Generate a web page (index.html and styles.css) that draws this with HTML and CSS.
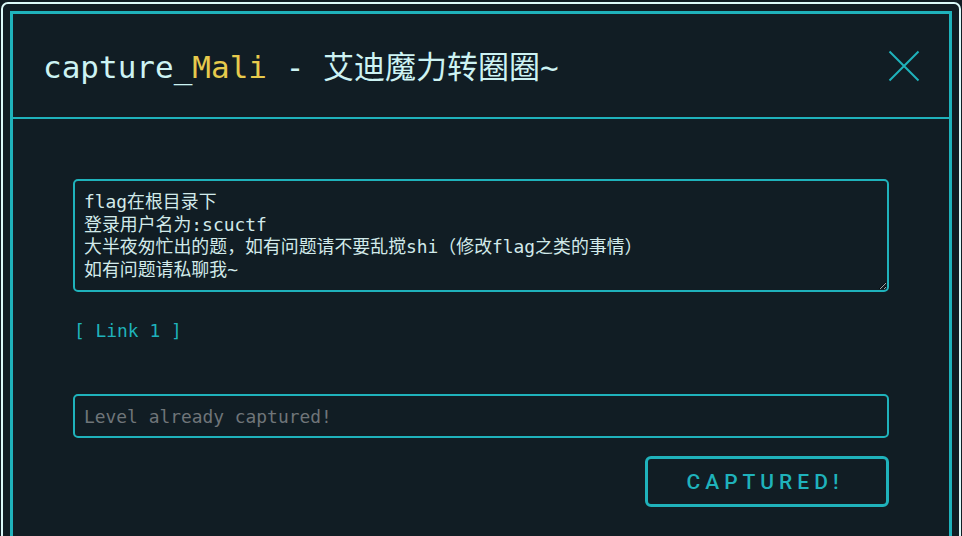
FILE: index.html
```html
<!DOCTYPE html>
<html lang="zh">
<head>
<meta charset="utf-8">
<title>capture_Mali</title>
<link rel="stylesheet" href="styles.css">
</head>
<body>
<div class="frame">
  <div class="modal">
    <div class="modal-header">
      <h1 class="title">capture_<span class="accent">Mali</span> - 艾迪魔力转圈圈~</h1>
      <button class="close" aria-label="close">
        <svg width="32" height="32" viewBox="0 0 32 32"><path d="M1.5 1.5 L30.5 30.5 M30.5 1.5 L1.5 30.5" stroke="#1fb2bb" stroke-width="2" fill="none"/></svg>
      </button>
    </div>
    <div class="modal-body">
      <textarea class="desc" readonly>flag在根目录下
登录用户名为:scuctf
大半夜匆忙出的题，如有问题请不要乱搅shi（修改flag之类的事情）
如有问题请私聊我~</textarea>
      <p class="links"><a class="link" href="#">[ Link 1 ]</a></p>
      <input class="flag" type="text" placeholder="Level already captured!" disabled>
      <div class="actions">
        <button class="submit">CAPTURED!</button>
      </div>
    </div>
  </div>
</div>
</body>
</html>
```

FILE: styles.css
```css
html, body {
  margin: 0;
  padding: 0;
  height: 100%;
  overflow: hidden;
  background: #111d24;
}
.frame {
  margin: 2px 0 0 1px;
  width: 960px;
  height: 700px;
  box-sizing: border-box;
  border: 2px solid #dcfafa;
  border-radius: 7px;
  padding: 7px 7px 0 7px;
  background: #111d24;
}
.modal {
  border: 3px solid #1fb2bb;
  height: 680px;
  box-sizing: border-box;
}
.modal-header {
  height: 103px;
  border-bottom: 2px solid #1fb2bb;
  display: flex;
  align-items: center;
  justify-content: space-between;
  padding: 0 30px 0 30px;
}
.title {
  margin: 0 0 3px 0;
  font-family: "DejaVu Sans Mono", "Noto Sans CJK SC", monospace;
  font-weight: normal;
  font-size: 31px;
  color: #cdf3f3;
}
.accent {
  color: #e6ca4c;
}
.close {
  background: none;
  border: 0;
  padding: 0;
  width: 32px;
  height: 32px;
  display: flex;
  margin-right: -1px;
}
.modal-body {
  padding: 60px 60px 0 60px;
  display: flex;
  flex-direction: column;
}
.desc {
  height: 113px;
  box-sizing: border-box;
  background: #111d24;
  border: 2px solid #1fb2bb;
  border-radius: 5px;
  padding: 10px 9px;
  font-family: "DejaVu Sans Mono", "Noto Sans CJK SC", monospace;
  font-size: 17.9px;
  line-height: 22.5px;
  color: #d2eaea;
  outline: none;
  overflow: hidden;
  resize: vertical;
}
.links {
  margin: 28px 0 52px 1px;
  line-height: 22px;
  font-family: "DejaVu Sans Mono", "Noto Sans CJK SC", monospace;
  font-size: 17.9px;
}
.link {
  color: #1fb2bb;
  text-decoration: none;
}
.flag {
  height: 44px;
  box-sizing: border-box;
  background: #111d24;
  border: 2px solid #1fb2bb;
  border-radius: 5px;
  padding: 0 9px;
  font-family: "DejaVu Sans Mono", monospace;
  font-size: 17.9px;
  color: #d2eaea;
  outline: none;
}
.flag::placeholder {
  color: #6f7579;
}
.actions {
  display: flex;
  justify-content: flex-end;
  margin-top: 18px;
}
.submit {
  width: 244px;
  height: 51px;
  box-sizing: border-box;
  background: #111d24;
  border: 3px solid #1fb2bb;
  border-radius: 6px;
  color: #1fb2bb;
  font-family: Roboto, "Liberation Sans", sans-serif;
  font-weight: 500;
  font-size: 21px;
  letter-spacing: 5px;
  padding: 0 4px 0 0;
}
```
